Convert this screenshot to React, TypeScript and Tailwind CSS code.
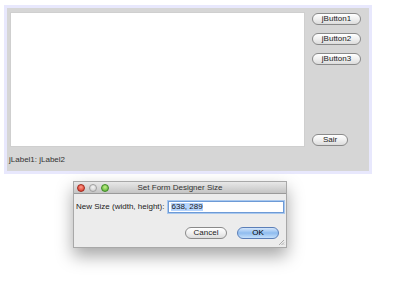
import React from "react";

const font = { fontFamily: '"Liberation Sans", Arial, sans-serif' };

const PillButton: React.FC<{ label: string; w: string; blue?: boolean }> = ({ label, w, blue }) => (
  <div
    className={`${w} h-[12px] rounded-full border flex items-center justify-center text-[8px] leading-none ${
      blue
        ? "border-[#5b7fb8] bg-gradient-to-b from-[#d4e6fb] via-[#8fbcef] to-[#c5e0fb] text-black"
        : "border-[#8a8a8a] bg-gradient-to-b from-white via-[#f0f0f0] to-[#dcdcdc] text-[#222]"
    }`}
  >
    {label}
  </div>
);

const App: React.FC = () => {
  return (
    <div className="w-[400px] h-[284px] bg-white overflow-hidden" style={font}>
      {/* form designer frame */}
      <div className="ml-[4px] mt-[5px] w-[368px] h-[169px] border-[3px] border-[#e8e8fd] bg-[#d6d6d6] flex flex-col">
        <div className="flex pl-[3px] pt-[4px] pr-[6px]">
          <div className="w-[295px] h-[135px] bg-white border border-[#cfcfcf]" />
          <div className="ml-[7px] flex flex-col h-[135px]">
            <div className="mt-[1px] flex flex-col gap-[8px]">
              <PillButton label="jButton1" w="w-[49px]" />
              <PillButton label="jButton2" w="w-[49px]" />
              <PillButton label="jButton3" w="w-[49px]" />
            </div>
            <div className="mt-auto mb-[1px]">
              <PillButton label="Sair" w="w-[36px]" />
            </div>
          </div>
        </div>
        <div className="pl-[2px] mt-[9px] text-[8px] text-[#333] leading-none">jLabel1: jLabel2</div>
      </div>

      {/* dialog */}
      <div className="ml-[73px] mt-[7px] w-[214px] h-[67px] bg-[#ececec] border border-[#a8a8a8] shadow-[0_8px_16px_rgba(0,0,0,0.35)] flex flex-col relative">
        <div className="h-[12px] bg-gradient-to-b from-[#e8e8e8] to-[#c4c4c4] border-b border-[#9a9a9a] flex items-center relative">
          <div className="flex gap-[4px] ml-[3px]">
            <span className="w-[8px] h-[8px] rounded-full bg-[radial-gradient(circle_at_50%_35%,#ff9a8a,#d42a1c)] border border-[#a0281c]" />
            <span className="w-[8px] h-[8px] rounded-full bg-[radial-gradient(circle_at_50%_35%,#f4f4f4,#c4c4c4)] border border-[#a0a0a0]" />
            <span className="w-[8px] h-[8px] rounded-full bg-[radial-gradient(circle_at_50%_35%,#c4f08a,#4aa82a)] border border-[#3e8a24]" />
          </div>
          <div className="absolute inset-0 flex items-center justify-center text-[8px] text-[#333] leading-none">
            Set Form Designer Size
          </div>
        </div>
        <div className="flex items-center mt-[7px] ml-[2px]">
          <span className="text-[8px] text-[#222] leading-none">New Size (width, height):</span>
          <div className="ml-[4px] w-[116px] h-[12px] bg-white border border-[#6d9ad6] shadow-[0_0_0_1px_#a9c8ee] flex items-center pl-[2px]">
            <span className="text-[8px] leading-none bg-[#b5d4fd] text-[#1a1a1a]">638, 289</span>
          </div>
        </div>
        <div className="flex justify-end gap-[10px] mt-[14px] mr-[7px]">
          <PillButton label="Cancel" w="w-[42px]" />
          <PillButton label="OK" w="w-[42px]" blue />
        </div>
        <svg className="absolute right-[1px] bottom-[1px]" width="7" height="7" viewBox="0 0 7 7">
          <path d="M6 1 L1 6 M6 3.5 L3.5 6 M6 5.5 L5.5 6" stroke="#9a9a9a" strokeWidth="0.8" />
        </svg>
      </div>
    </div>
  );
};

export default App;
